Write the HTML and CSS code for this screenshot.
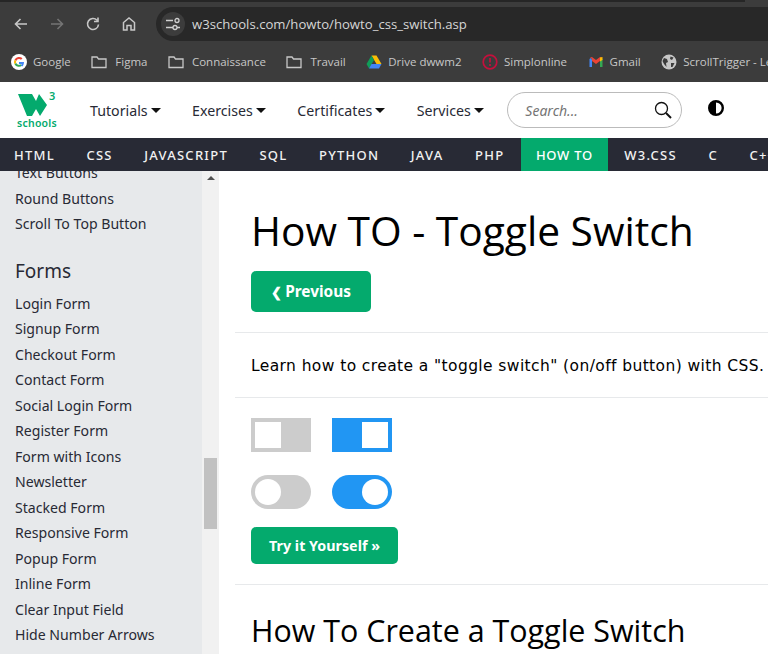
FILE: index.html
```html
<!DOCTYPE html>
<html lang="en">
<head>
    <meta charset="UTF-8">
    <title>How TO - Toggle Switch</title>
    <link rel="stylesheet" href="styles.css">
</head>
<body>
    <div class="tab-edge"></div>
    <div class="toolbar">
        <div class="tool-icons">
            <svg class="tool" viewBox="0 0 16 16"><path d="M14 8H3M7.500 3 2.500 8l5 5" fill="none" stroke="#c7c7c7" stroke-width="1.600"/></svg>
            <svg class="tool" viewBox="0 0 16 16"><path d="M2 8h11M8.500 3l5 5-5 5" fill="none" stroke="#747474" stroke-width="1.600"/></svg>
            <svg class="tool" viewBox="0 0 16 16"><path d="M13.500 8.500A5.500 5.500 0 1 1 12 4.200M13 1.500v4H9" fill="none" stroke="#c7c7c7" stroke-width="1.600"/></svg>
            <svg class="tool" viewBox="0 0 16 16"><path d="M2.500 14V6.500L8 2l5.500 4.500V14H10V9.500H6V14z" fill="none" stroke="#c7c7c7" stroke-width="1.500"/></svg>
        </div>
        <div class="address">
            <span class="site-info">
                <svg viewBox="0 0 16 16" width="16" height="16"><path d="M1 4.500h7M1 11.500h7M12 11.500h3" stroke="#d0d0d0" stroke-width="1.300" fill="none"/><circle cx="12" cy="4.500" r="2" fill="none" stroke="#d0d0d0" stroke-width="1.300"/><circle cx="10" cy="11.500" r="2" fill="none" stroke="#d0d0d0" stroke-width="1.300"/></svg>
            </span>
            <span class="url">w3schools.com/howto/howto_css_switch.asp</span>
        </div>
    </div>

    <div class="bookmarks">
        <span class="mark">
            <svg viewBox="0 0 16 16" width="16" height="16"><circle cx="8" cy="8" r="8" fill="#fff"/><path d="M8 5a3 3 0 0 1 2 .8l1.500-1.500A5 5 0 0 0 3.500 5.800L5.200 7A3 3 0 0 1 8 5z" fill="#ea4335"/><path d="M5.200 7 3.500 5.800a5 5 0 0 0 0 4.400L5.200 9a3 3 0 0 1 0-2z" fill="#fbbc05"/><path d="M5.200 9l-1.700 1.200a5 5 0 0 0 7.800 1.300L9.700 10.300A3 3 0 0 1 5.200 9z" fill="#34a853"/><path d="M13 8H8v2h2.800a2.500 2.500 0 0 1-1.100 1.300l1.600 1.200C12.400 11.500 13 9.800 13 8z" fill="#4285f4"/></svg>
            Google
        </span>
        <span class="mark mark-folder"><svg viewBox="0 0 16 16" width="16" height="16"><path d="M1 3h5l1.500 2H15v8.500H1z" fill="none" stroke="#c7c7c7" stroke-width="1.300"/></svg>Figma</span>
        <span class="mark mark-folder"><svg viewBox="0 0 16 16" width="16" height="16"><path d="M1 3h5l1.500 2H15v8.500H1z" fill="none" stroke="#c7c7c7" stroke-width="1.300"/></svg>Connaissance</span>
        <span class="mark mark-folder"><svg viewBox="0 0 16 16" width="16" height="16"><path d="M1 3h5l1.500 2H15v8.500H1z" fill="none" stroke="#c7c7c7" stroke-width="1.300"/></svg>Travail</span>
        <span class="mark">
            <svg viewBox="0 0 16 16" width="16" height="16"><path d="M5.500 1.500h5l5 8.500h-5z" fill="#fbbc05"/><path d="M5.500 1.500.5 10 3 14.500 8 6z" fill="#0f9d58"/><path d="M5.500 10h10L13 14.500H3z" fill="#4285f4"/></svg>
            Drive dwwm2
        </span>
        <span class="mark">
            <svg viewBox="0 0 16 16" width="16" height="16"><circle cx="8" cy="8" r="6.800" fill="none" stroke="#c4103c" stroke-width="1.700"/><path d="M8 4v4.500M8 10v2" stroke="#c4103c" stroke-width="1.700"/></svg>
            Simplonline
        </span>
        <span class="mark">
            <svg viewBox="0 0 16 16" width="16" height="16"><path d="M4 5 8 8l4-3 2-1.500L12 3 8 6 4 3 2 3.500zM4 5v2l4 3 4-3V5L8 8z" fill="#ea4335"/><path d="M1.500 5v8H4V5.500L2.800 4z" fill="#4285f4"/><path d="M14.500 5v8H12V5.500L13.200 4z" fill="#34a853"/><path d="M12 3.500 14.500 3v3L12 7.500z" fill="#fbbc05"/></svg>
            Gmail
        </span>
        <span class="mark">
            <svg viewBox="0 0 16 16" width="16" height="16"><circle cx="8" cy="8" r="7.500" fill="#c7c7c7"/><path d="M3 4l3 1 1 3-2 1 .500 4L3 10 1.500 7zM9.500 2.500l3 1-1.500 2.500-2-1zM10 9h3.500l-2 4H10z" fill="#3c3c3c"/></svg>
            ScrollTrigger - Learn
        </span>
    </div>

    <header class="site-head">
        <div class="logo">
            <svg viewBox="0 0 30 22" width="30" height="22"><path d="M0 0H14L18 7 21 0 29 11 22 22 18 15 14 22H9z" fill="#04aa6d"/></svg>
            <span class="logo-three">3</span>
            <span class="logo-name">schools</span>
        </div>
        <nav class="menu">
            <span class="menu-item">Tutorials<i class="caret"></i></span>
            <span class="menu-item">Exercises<i class="caret"></i></span>
            <span class="menu-item">Certificates<i class="caret"></i></span>
            <span class="menu-item">Services<i class="caret"></i></span>
        </nav>
        <div class="search">
            <span class="search-hint">Search...</span>
            <svg viewBox="0 0 18 18" width="18" height="18"><circle cx="7.500" cy="7.500" r="6" fill="none" stroke="#111" stroke-width="1.300"/><path d="M12 12l5 5" stroke="#111" stroke-width="2"/></svg>
        </div>
        <svg class="contrast" viewBox="0 0 16 16" width="16" height="16"><circle cx="8" cy="8" r="6.800" fill="#fff" stroke="#000" stroke-width="2.400"/><path d="M8 1.200a6.800 6.800 0 0 0 0 13.600z" fill="#000"/></svg>
    </header>

    <nav class="topics">
        <a>HTML</a>
        <a>CSS</a>
        <a>JAVASCRIPT</a>
        <a>SQL</a>
        <a>PYTHON</a>
        <a>JAVA</a>
        <a>PHP</a>
        <a class="on">HOW TO</a>
        <a>W3.CSS</a>
        <a>C</a>
        <a>C++</a>
    </nav>

    <div class="page">
        <aside class="side">
            <div class="side-list">
                <a>Text Buttons</a>
                <a>Round Buttons</a>
                <a>Scroll To Top Button</a>
                <h3>Forms</h3>
                <a>Login Form</a>
                <a>Signup Form</a>
                <a>Checkout Form</a>
                <a>Contact Form</a>
                <a>Social Login Form</a>
                <a>Register Form</a>
                <a>Form with Icons</a>
                <a>Newsletter</a>
                <a>Stacked Form</a>
                <a>Responsive Form</a>
                <a>Popup Form</a>
                <a>Inline Form</a>
                <a>Clear Input Field</a>
                <a>Hide Number Arrows</a>
            </div>
            <div class="scrollbar">
                <i class="arrow"></i>
                <i class="thumb"></i>
            </div>
        </aside>

        <main class="content">
            <section class="block block-title">
                <h1>How TO - Toggle Switch</h1>
                <a class="btn btn-prev"><b>❮</b> Previous</a>
            </section>
            <section class="block block-lead">
                <p>Learn how to create a "toggle switch" (on/off button) with CSS.</p>
            </section>
            <section class="block block-demo">
                <div class="switches">
                    <span class="switch"><i></i></span>
                    <span class="switch is-on"><i></i></span>
                    <span class="switch round"><i></i></span>
                    <span class="switch round is-on"><i></i></span>
                </div>
                <a class="btn btn-try">Try it Yourself »</a>
            </section>
            <section class="block block-last">
                <h2>How To Create a Toggle Switch</h2>
            </section>
        </main>
    </div>
</body>
</html>
```

FILE: styles.css
```css
* {
    margin: 0;
    padding: 0;
    box-sizing: border-box;
}

html, body {
    height: 654px;
    width: 768px;
    overflow: hidden;
}

body {
    display: flex;
    flex-direction: column;
    background: #3c3c3c;
    font-family: "Noto Sans", sans-serif;
}

/* browser chrome */
.tab-edge {
    height: 2px;
    width: 745px;
    flex: none;
    background: #262626;
}

.toolbar {
    height: 39px;
    flex: none;
    display: flex;
    align-items: flex-end;
    background: #3c3c3c;
    padding-left: 13px;
}

.tool-icons {
    display: flex;
    gap: 20px;
    height: 34px;
    align-items: center;
}

.tool {
    width: 16px;
    height: 16px;
}

.address {
    flex: 1;
    height: 34px;
    margin-left: 19px;
    display: flex;
    align-items: center;
    gap: 7px;
    padding-left: 5px;
    background: #282828;
    border-radius: 17px 0 0 17px;
}

.site-info {
    width: 24px;
    height: 24px;
    display: grid;
    place-content: center;
    border-radius: 50%;
    background: #3c3c3c;
}

.url {
    font-family: "Open Sans", sans-serif;
    font-size: 13.150px;
    color: #d6d6d6;
}

.bookmarks {
    height: 41px;
    flex: none;
    display: flex;
    align-items: center;
    gap: 20.500px;
    padding-left: 11px;
    background: #3c3c3c;
    white-space: nowrap;
    overflow: hidden;
}

.mark {
    display: flex;
    align-items: center;
    gap: 6px;
    font-family: "Open Sans", sans-serif;
    font-size: 11.500px;
    color: #c7c7c7;
}

.mark-folder {
    gap: 8px;
}

/* site header */
.site-head {
    height: 56px;
    flex: none;
    display: flex;
    align-items: center;
    padding-left: 17px;
    background: white;
}

.logo {
    position: relative;
    width: 40px;
    height: 40px;
    padding: 4px 0 0 1px;
}

.logo svg {
    display: block;
}

.logo-three {
    position: absolute;
    top: 1px;
    left: 32px;
    font-size: 11px;
    line-height: 10px;
    font-weight: 600;
    color: #04aa6d;
}

.logo-name {
    position: absolute;
    left: 0;
    top: 28px;
    font-size: 10.500px;
    line-height: 10px;
    font-weight: 600;
    letter-spacing: .25px;
    color: #04aa6d;
}

.menu {
    display: flex;
    gap: 31.500px;
    margin-left: 33px;
}

.menu-item {
    display: flex;
    align-items: center;
    gap: 3px;
    font-size: 14.200px;
    color: #282a35;
}

.caret {
    width: 0;
    height: 0;
    border: 5px solid transparent;
    border-top: 5px solid #111;
    border-bottom: 0;
}

.search {
    width: 175px;
    height: 36px;
    margin-left: 23.500px;
    display: flex;
    align-items: center;
    justify-content: space-between;
    padding: 0 9px 0 17px;
    border: 1px solid #bbb;
    border-radius: 18px;
}

.search-hint {
    font-size: 14px;
    font-style: italic;
    color: #757575;
}

.contrast {
    margin-left: 26px;
    margin-top: -4px;
}

/* topic bar */
.topics {
    height: 33px;
    flex: none;
    display: flex;
    padding-left: 14px;
    gap: 31.500px;
    background: #282a35;
    white-space: nowrap;
    overflow: hidden;
}

.topics a {
    display: flex;
    align-items: center;
    font-size: 13px;
    font-weight: 500;
    letter-spacing: 1.250px;
    color: #f1f1f1;
}

.topics a.on {
    margin: 0 -15px;
    padding: 0 15px;
    background: #04aa6d;
    letter-spacing: .7px;
    color: white;
}

/* sidebar */
.page {
    flex: 1;
    display: flex;
    min-height: 0;
    background: white;
}

.side {
    width: 219px;
    flex: none;
    display: flex;
    background: #e7e9eb;
}

.side-list {
    flex: 1;
    overflow: hidden;
    margin-top: -11px;
    padding-left: 15px;
}

.side-list a {
    display: block;
    height: 25.500px;
    line-height: 25.500px;
    font-size: 14.100px;
    color: #282a35;
    white-space: nowrap;
}

.side-list h3 {
    height: 54px;
    padding-top: 20px;
    font-size: 19px;
    line-height: 28px;
    font-weight: 400;
    color: #282a35;
}

.scrollbar {
    position: relative;
    width: 17px;
    background: #f1f1f1;
}

.arrow {
    position: absolute;
    top: 5px;
    left: 5px;
    width: 0;
    height: 0;
    border: 4px solid transparent;
    border-top: 0;
    border-bottom: 4px solid #505050;
}

.thumb {
    position: absolute;
    top: 287px;
    left: 2px;
    width: 13px;
    height: 71px;
    background: #c1c1c1;
}

/* main column */
.content {
    flex: 1;
    min-width: 0;
    padding-left: 16px;
}

.block {
    padding-left: 16px;
    border-bottom: 1px solid #e7e9eb;
    white-space: nowrap;
}

.block-title {
    height: 162px;
    padding-top: 29px;
}

h1 {
    font-size: 40.700px;
    line-height: 60px;
    font-weight: 400;
    font-family: "Open Sans", sans-serif;
    color: black;
    margin-bottom: 11px;
}

.btn {
    display: flex;
    align-items: center;
    justify-content: center;
    background: #04aa6d;
    color: white;
    font-weight: 700;
    border-radius: 5px;
}

.btn-prev {
    width: 120px;
    height: 41px;
    font-size: 15.400px;
}

.btn-prev b {
    font-size: 13px;
    margin-right: 3px;
}

.block-lead {
    height: 65px;
    padding-top: 1px;
    display: flex;
    align-items: center;
}

.block-lead p {
    font-family: "DejaVu Sans", sans-serif;
    font-size: 15.500px;
    letter-spacing: .4px;
    color: black;
}

.block-demo {
    height: 187px;
    padding-top: 20px;
}

.switches {
    display: grid;
    grid-template-columns: 60px 60px;
    column-gap: 21px;
    row-gap: 23px;
    margin-bottom: 18px;
}

.switch {
    display: flex;
    align-items: center;
    height: 34px;
    padding: 0 4px;
    background: #ccc;
}

.switch i {
    width: 26px;
    height: 26px;
    background: white;
}

.switch.is-on {
    justify-content: flex-end;
    background: #2196f3;
}

.switch.round {
    border-radius: 17px;
}

.switch.round i {
    border-radius: 50%;
}

.btn-try {
    width: 147px;
    height: 37px;
    font-size: 14.300px;
}

.block-last {
    border-bottom: 0;
    padding-top: 20px;
}

h2 {
    font-size: 30.450px;
    line-height: 50px;
    font-weight: 400;
    font-family: "Open Sans", sans-serif;
    color: black;
}
```
